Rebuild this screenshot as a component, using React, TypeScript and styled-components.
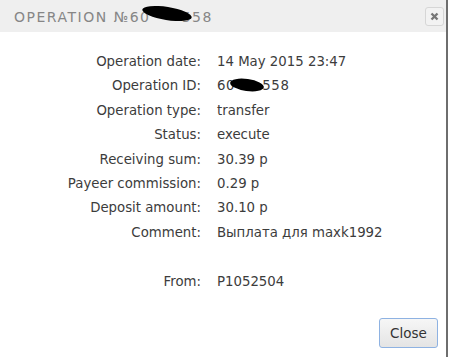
import React from "react";
import styled, { createGlobalStyle } from "styled-components";

const Global = createGlobalStyle`
  html, body { margin: 0; padding: 0; background: #fff; }
  body { width: 449px; height: 357px; overflow: hidden; }
`;

const Dialog = styled.div`
  width: 448px;
  height: 357px;
  box-sizing: border-box;
  border-right: 2px solid #6e6e6e;
  display: flex;
  flex-direction: column;
  background: #fff;
  font-family: "DejaVu Sans", sans-serif;
`;

const Header = styled.div`
  height: 32px;
  background: #efefef;
  display: flex;
  align-items: center;
  justify-content: space-between;
  padding: 0 2px 0 14px;
  flex-shrink: 0;
`;

const Title = styled.div`
  font-family: "DejaVu Sans", sans-serif;
  font-size: 14px;
  letter-spacing: 1.5px;
  color: #868686;
  position: relative;
  white-space: nowrap;
  padding-top: 1px;
`;

const Hidden = styled.span`
  color: transparent;
`;

const Blob = styled.span<{ $l: number; $t: number; $w: number; $h: number; $r: number }>`
  position: absolute;
  left: ${(p) => p.$l}px;
  top: ${(p) => p.$t}px;
  width: ${(p) => p.$w}px;
  height: ${(p) => p.$h}px;
  background: #000;
  border-radius: 50%;
  transform: rotate(${(p) => p.$r}deg);
`;

const XButton = styled.button`
  width: 19px;
  height: 19px;
  padding: 0;
  border: 1px solid #d6d6d6;
  border-radius: 3px;
  background: #f2f2f2;
  display: flex;
  align-items: center;
  justify-content: center;
`;

const Body = styled.div`
  flex: 1;
  display: flex;
  flex-direction: column;
  padding: 18px 0 0 0;
`;

const Grid = styled.div`
  display: grid;
  grid-template-columns: 201px auto;
  column-gap: 16px;
  font-size: 13.3px;
  line-height: 24.4px;
  color: #3c3c3c;
`;

const Label = styled.div`
  text-align: right;
  white-space: nowrap;
`;

const Value = styled.div`
  position: relative;
  white-space: nowrap;
`;

const IdText = styled.span`
  letter-spacing: 0.6px;
`;

const Spacer = styled.div`
  grid-column: 1 / 3;
  height: 24.4px;
`;

const Footer = styled.div`
  margin-top: auto;
  display: flex;
  justify-content: flex-end;
  padding: 0 8px 9px 0;
`;

const CloseButton = styled.button`
  width: 59px;
  height: 30px;
  border: 1px solid #8eb2e2;
  border-radius: 3px;
  background: linear-gradient(#f6f6f6, #e4e4e4);
  font-family: "DejaVu Sans", sans-serif;
  font-size: 13.5px;
  color: #333;
  padding: 0;
`;

type Row = { label: string; value: React.ReactNode };

const rows: Row[] = [
  { label: "Operation date:", value: "14 May 2015 23:47" },
  {
    label: "Operation ID:",
    value: (
      <>
        <IdText>
          60<Hidden>123</Hidden>558
        </IdText>
        <Blob $l={13} $t={5} $w={34} $h={12} $r={8} />
      </>
    ),
  },
  { label: "Operation type:", value: "transfer" },
  { label: "Status:", value: "execute" },
  { label: "Receiving sum:", value: "30.39 р" },
  { label: "Payeer commission:", value: "0.29 р" },
  { label: "Deposit amount:", value: "30.10 р" },
  { label: "Comment:", value: "Выплата для maxk1992" },
];

export default function App() {
  return (
    <>
      <Global />
      <Dialog>
        <Header>
          <Title>
            OPERATION №60<Hidden>123</Hidden>558
            <Blob $l={128} $t={-1} $w={50} $h={13} $r={9} />
          </Title>
          <XButton aria-label="close">
            <svg width="9" height="9" viewBox="0 0 9 9">
              <path d="M1.5 1.5 L7.5 7.5 M7.5 1.5 L1.5 7.5" stroke="#777" strokeWidth="2.4" strokeLinecap="butt" />
            </svg>
          </XButton>
        </Header>
        <Body>
          <Grid>
            {rows.map((r) => (
              <React.Fragment key={r.label}>
                <Label>{r.label}</Label>
                <Value>{r.value}</Value>
              </React.Fragment>
            ))}
            <Spacer />
            <Label>From:</Label>
            <Value>P1052504</Value>
          </Grid>
        </Body>
        <Footer>
          <CloseButton>Close</CloseButton>
        </Footer>
      </Dialog>
    </>
  );
}
